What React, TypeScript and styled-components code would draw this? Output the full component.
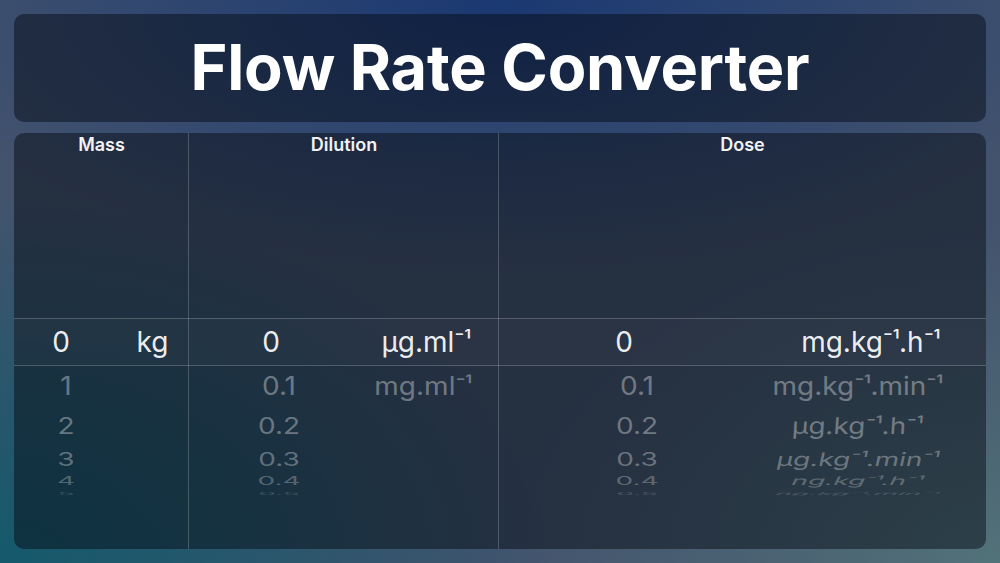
import React from "react";
import styled, { createGlobalStyle } from "styled-components";

const Global = createGlobalStyle`
  html, body {
    margin: 0;
    padding: 0;
    width: 1000px;
    height: 563px;
    overflow: hidden;
  }
  body {
    font-family: Inter, "Noto Sans", "DejaVu Sans", sans-serif;
    background:
      radial-gradient(ellipse 62% 48% at 50% 0%, #1a3872 0%, rgba(26,56,114,0.55) 45%, rgba(26,56,114,0) 100%),
      radial-gradient(ellipse 55% 65% at 0% 100%, #15596c 0%, rgba(21,89,108,0.6) 45%, rgba(21,89,108,0) 100%),
      radial-gradient(ellipse 50% 60% at 100% 100%, #527279 0%, rgba(82,114,121,0.5) 45%, rgba(82,114,121,0) 100%),
      #43536d;
  }
`;

const Page = styled.div`
  width: 1000px;
  height: 563px;
  box-sizing: border-box;
  padding: 14px;
  display: flex;
  flex-direction: column;
  gap: 11px;
`;

const Panel = styled.div`
  background: rgba(4, 8, 16, 0.47);
  border-radius: 10px;
`;

const TitleBar = styled(Panel)`
  height: 108px;
  flex: none;
  display: flex;
  align-items: center;
  justify-content: center;
`;

const Title = styled.h1`
  margin: 0;
  color: #ffffff;
  font-size: 63px;
  font-weight: 700;
  letter-spacing: -0.2px;
  line-height: 1;
  transform: translateY(-1px);
`;

const Board = styled(Panel)`
  flex: 1;
  display: grid;
  grid-template-columns: 175px 310px 1fr;
  overflow: hidden;
`;

const Column = styled.div<{ $divider?: boolean }>`
  display: flex;
  flex-direction: column;
  border-left: ${(p) => (p.$divider ? "1px solid rgba(255,255,255,0.2)" : "none")};
  margin-left: ${(p) => (p.$divider ? "-1px" : "0")};
`;

const Label = styled.div`
  height: 24px;
  line-height: 24px;
  text-align: center;
  color: #f2f2f2;
  font-size: 18px;
  font-weight: 600;
`;

const Wheel = styled.div`
  margin-top: 161px;
  display: flex;
  flex-direction: column;
`;

const Row = styled.div<{ $cols: string; $h: number; $selected?: boolean }>`
  display: grid;
  grid-template-columns: ${(p) => p.$cols};
  grid-template-rows: minmax(0, 1fr);
  height: ${(p) => p.$h}px;
  box-sizing: border-box;
  border-top: ${(p) => (p.$selected ? "1px solid rgba(255,255,255,0.2)" : "none")};
  border-bottom: ${(p) => (p.$selected ? "1px solid rgba(255,255,255,0.2)" : "none")};
  background: ${(p) => (p.$selected ? "rgba(255,255,255,0.025)" : "transparent")};
`;

const Cell = styled.div<{
  $scale: number;
  $alpha: number;
  $skew?: number;
  $pl?: number;
  $pr?: number;
  $shift?: number;
}>`
  display: flex;
  align-items: center;
  justify-content: center;
  min-height: 0;
  white-space: nowrap;
  font-size: 28px;
  font-weight: 400;
  padding-left: ${(p) => p.$pl ?? 0}px;
  padding-right: ${(p) => p.$pr ?? 0}px;
  color: rgba(255, 255, 255, ${(p) => p.$alpha});
  & > span {
    display: inline-block;
    line-height: 1;
    transform: translateX(${(p) => p.$shift ?? 0}px) scaleY(${(p) => p.$scale}) skewX(${(p) => p.$skew ?? 0}deg);
  }
`;

const Sup = styled.span`
  font-size: 0.86em;
  letter-spacing: -0.03em;
  vertical-align: 0.12em;
`;

function Unit({ text }: { text: string }) {
  const parts = text.split("⁻¹");
  return (
    <span>
      {parts.map((p, i) => (
        <React.Fragment key={i}>
          {p}
          {i < parts.length - 1 && <Sup>⁻¹</Sup>}
        </React.Fragment>
      ))}
    </span>
  );
}

type Level = { h: number; scale: number; alpha: number; skew: number };

const levels: Level[] = [
  { h: 48, scale: 1, alpha: 0.93, skew: 0 },
  { h: 40, scale: 0.92, alpha: 0.37, skew: 0 },
  { h: 40, scale: 0.82, alpha: 0.35, skew: -3 },
  { h: 26, scale: 0.66, alpha: 0.32, skew: -8 },
  { h: 18, scale: 0.42, alpha: 0.27, skew: -12 },
  { h: 8, scale: 0.14, alpha: 0.18, skew: -14 },
];

type Spec = {
  label: string;
  cols: string;
  values: string[];
  units: string[];
  valueShift: number;
  unitPl?: number;
  unitPr?: number;
  selShift?: number;
  unitSkew?: boolean;
};

const columns: Spec[] = [
  {
    label: "Mass",
    cols: "94px 1fr",
    values: ["0", "1", "2", "3", "4", "5"],
    units: ["kg"],
    valueShift: 5,
    unitPl: 8,
  },
  {
    label: "Dilution",
    cols: "164px 1fr",
    values: ["0", "0.1", "0.2", "0.3", "0.4", "0.5"],
    units: ["µg.ml⁻¹", "mg.ml⁻¹"],
    valueShift: 8,
    selShift: 3,
    unitPr: 6,
  },
  {
    label: "Dose",
    cols: "250px 1fr",
    values: ["0", "0.1", "0.2", "0.3", "0.4", "0.5"],
    units: [
      "mg.kg⁻¹.h⁻¹",
      "mg.kg⁻¹.min⁻¹",
      "µg.kg⁻¹.h⁻¹",
      "µg.kg⁻¹.min⁻¹",
      "ng.kg⁻¹.h⁻¹",
      "ng.kg⁻¹.min⁻¹",
    ],
    valueShift: 13,
    unitPr: 20,
    selShift: 13,
    unitSkew: true,
  },
];

export default function App() {
  return (
    <>
      <Global />
      <Page>
        <TitleBar>
          <Title>Flow Rate Converter</Title>
        </TitleBar>
        <Board>
          {columns.map((c, ci) => (
            <Column key={c.label} $divider={ci > 0}>
              <Label>{c.label}</Label>
              <Wheel>
                {levels.map((lv, i) => (
                  <Row key={i} $cols={c.cols} $h={lv.h} $selected={i === 0}>
                    <Cell
                      $scale={lv.scale}
                      $alpha={lv.alpha}
                      $shift={i === 0 ? 0 : c.valueShift}
                    >
                      <span>{c.values[i]}</span>
                    </Cell>
                    <Cell
                      $scale={lv.scale}
                      $alpha={lv.alpha}
                      $skew={c.unitSkew ? lv.skew : 0}
                      $pl={c.unitPl}
                      $pr={c.unitPr}
                      $shift={i === 0 ? c.selShift : 0}
                    >
                      <Unit text={c.units[i] ?? ""} />
                    </Cell>
                  </Row>
                ))}
              </Wheel>
            </Column>
          ))}
        </Board>
      </Page>
    </>
  );
}
